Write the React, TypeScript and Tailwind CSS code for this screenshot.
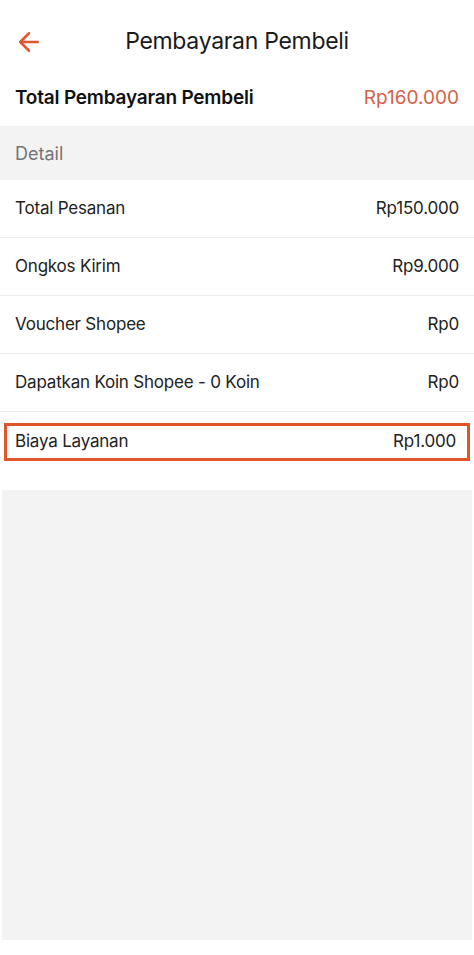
import { ArrowLeft } from "lucide-react";

const rows = [
  { label: "Total Pesanan", value: "Rp150.000" },
  { label: "Ongkos Kirim", value: "Rp9.000" },
  { label: "Voucher Shopee", value: "Rp0" },
  { label: "Dapatkan Koin Shopee - 0 Koin", value: "Rp0" },
];

export default function App() {
  return (
    <div className="w-[474px] h-[955px] bg-white flex flex-col text-[#222] font-['Inter',sans-serif]">
      {/* header */}
      <div className="relative h-[82px] flex items-center justify-center">
        <ArrowLeft size={30} strokeWidth={2} className="absolute left-[14px] top-[27px] text-[#e5532f]" />
        <h1 className="text-[23px] text-[#1a1a1a] tracking-[-0.3px]">Pembayaran Pembeli</h1>
      </div>

      <div className="h-[44px] flex items-start pt-[2px] justify-between px-[15px]">
        <span className="text-[19px] font-semibold text-[#111] tracking-[-0.2px]">Total Pembayaran Pembeli</span>
        <span className="text-[19px] text-[#d4614a]">Rp160.000</span>
      </div>

      <div className="h-[54px] bg-[#f3f3f3] flex items-center px-[15px]">
        <span className="text-[18px] text-[#757575]">Detail</span>
      </div>

      {rows.map((r) => (
        <div key={r.label} className="h-[58px] flex items-center justify-between px-[15px] border-b border-[#ececec]">
          <span className="text-[17px] tracking-[-0.2px]">{r.label}</span>
          <span className="text-[17px] tracking-[-0.2px]">{r.value}</span>
        </div>
      ))}

      <div className="pt-[11px] pb-[29px] px-[4px]">
        <div className="h-[38px] border-[3px] border-[#e2552a] flex items-center justify-between pl-[8px] pr-[11px]">
          <span className="text-[17px] tracking-[-0.2px]">Biaya Layanan</span>
          <span className="text-[17px] tracking-[-0.2px]">Rp1.000</span>
        </div>
      </div>

      <div className="mx-[2px] h-[450px] bg-[#f3f3f3]" />
    </div>
  );
}
